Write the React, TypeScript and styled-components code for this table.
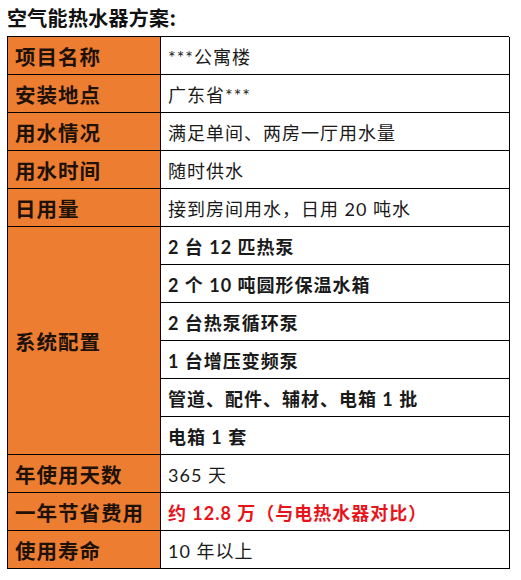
import styled, { createGlobalStyle } from 'styled-components';

const GlobalStyle = createGlobalStyle`
  html, body {
    margin: 0;
    padding: 0;
    background: #ffffff;
  }
  body {
    font-family: Lato, "Noto Sans CJK SC", sans-serif;
  }
`;

interface Row {
  label: string;
  value: string;
  bold?: boolean;
  red?: boolean;
}

const TOP_ROWS: Row[] = [
  { label: '项目名称', value: '***公寓楼' },
  { label: '安装地点', value: '广东省***' },
  { label: '用水情况', value: '满足单间、两房一厅用水量' },
  { label: '用水时间', value: '随时供水' },
  { label: '日用量', value: '接到房间用水，日用 20 吨水' },
];

const SYSTEM_ITEMS = [
  '2 台 12 匹热泵',
  '2 个 10 吨圆形保温水箱',
  '2 台热泵循环泵',
  '1 台增压变频泵',
  '管道、配件、辅材、电箱 1 批',
  '电箱 1 套',
];

const BOTTOM_ROWS: Row[] = [
  { label: '年使用天数', value: '365 天' },
  { label: '一年节省费用', value: '约 12.8 万（与电热水器对比）', red: true },
  { label: '使用寿命', value: '10 年以上' },
];

const App = () => {
  return (
    <S.Page>
      <GlobalStyle />
      <S.Title>空气能热水器方案:</S.Title>
      <S.Grid>
        {TOP_ROWS.map((row) => (
          <S.Fragment key={row.label}>
            <S.Label>{row.label}</S.Label>
            <S.Value>{row.value}</S.Value>
          </S.Fragment>
        ))}
        <S.Label $span={SYSTEM_ITEMS.length}>系统配置</S.Label>
        {SYSTEM_ITEMS.map((item) => (
          <S.Value key={item} $bold>
            {item}
          </S.Value>
        ))}
        {BOTTOM_ROWS.map((row) => (
          <S.Fragment key={row.label}>
            <S.Label>{row.label}</S.Label>
            <S.Value $bold={row.red} $red={row.red}>
              {row.value}
            </S.Value>
          </S.Fragment>
        ))}
      </S.Grid>
    </S.Page>
  );
};

const S = {
  Page: styled.div`
    width: 521px;
    padding: 4px 0 0 7px;
    box-sizing: border-box;
  `,
  Title: styled.div`
    font-family: "Noto Sans CJK SC", sans-serif;
    font-weight: 700;
    font-size: 20px;
    line-height: 28px;
    height: 32px;
    color: #111;
    letter-spacing: 0.3px;
  `,
  Grid: styled.div`
    display: grid;
    width: 502px;
    grid-template-columns: 153px 349px;
    grid-auto-rows: 38px;
    border-top: 1px solid #000;
    border-left: 1px solid #000;
    box-sizing: border-box;
  `,
  Fragment: styled.div`
    display: contents;
  `,
  Label: styled.div<{ $span?: number }>`
    grid-row: span ${(p) => p.$span ?? 1};
    background: #ed7d31;
    border-right: 1px solid #000;
    border-bottom: 1px solid #000;
    display: flex;
    align-items: center;
    padding-left: 7px;
    font-family: "Noto Sans CJK SC", sans-serif;
    font-weight: 700;
    font-size: 20.5px;
    letter-spacing: 1px;
    color: #1e1208;
  `,
  Value: styled.div<{ $bold?: boolean; $red?: boolean }>`
    border-right: 1px solid #000;
    border-bottom: 1px solid #000;
    display: flex;
    align-items: center;
    padding-left: 7px;
    font-size: 18px;
    letter-spacing: 1px;
    font-weight: ${(p) => (p.$bold ? 700 : 400)};
    color: ${(p) => (p.$red ? '#e8141b' : '#1a1a1a')};
  `,
};

export default App;
